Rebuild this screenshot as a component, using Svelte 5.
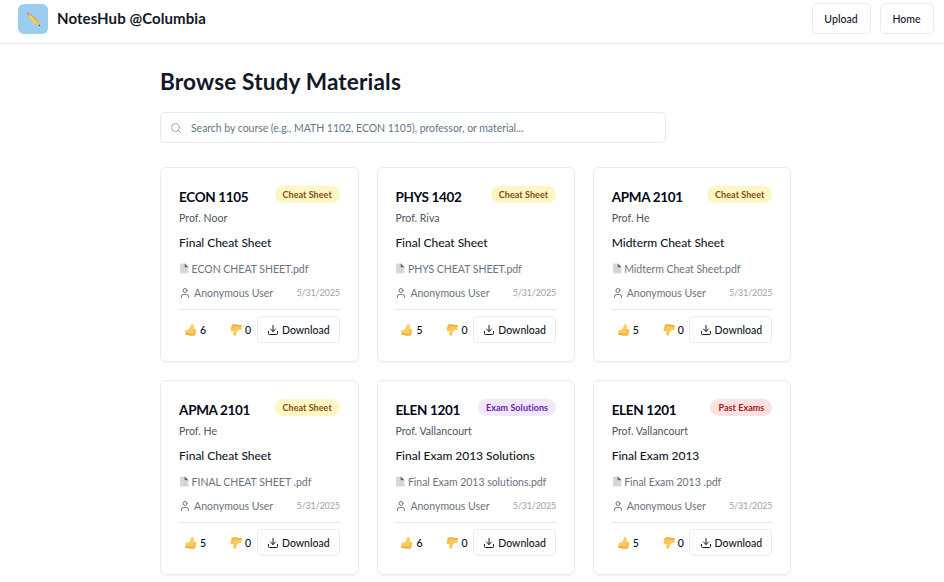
<script>
  const notes = [
    { course: 'ECON 1105', prof: 'Prof. Noor', title: 'Final Cheat Sheet', file: 'ECON CHEAT SHEET.pdf', tag: 'Cheat Sheet', kind: 'cheat', up: 6, down: 0 },
    { course: 'PHYS 1402', prof: 'Prof. Riva', title: 'Final Cheat Sheet', file: 'PHYS CHEAT SHEET.pdf', tag: 'Cheat Sheet', kind: 'cheat', up: 5, down: 0 },
    { course: 'APMA 2101', prof: 'Prof. He', title: 'Midterm Cheat Sheet', file: 'Midterm Cheat Sheet.pdf', tag: 'Cheat Sheet', kind: 'cheat', up: 5, down: 0 },
    { course: 'APMA 2101', prof: 'Prof. He', title: 'Final Cheat Sheet', file: 'FINAL CHEAT SHEET .pdf', tag: 'Cheat Sheet', kind: 'cheat', up: 5, down: 0 },
    { course: 'ELEN 1201', prof: 'Prof. Vallancourt', title: 'Final Exam 2013 Solutions', file: 'Final Exam 2013 solutions.pdf', tag: 'Exam Solutions', kind: 'solutions', up: 6, down: 0 },
    { course: 'ELEN 1201', prof: 'Prof. Vallancourt', title: 'Final Exam 2013', file: 'Final Exam 2013 .pdf', tag: 'Past Exams', kind: 'exams', up: 5, down: 0 }
  ];
</script>

{#snippet thumb(down)}
  <svg class="thumb" class:down viewBox="0 0 24 24" aria-hidden="true">
    <path d="M1 12h5c2.800-2.200 5-4.800 5.500-7.800.3-1.800.3-4 2.200-4 3.200 0 4.300 3.300 3.900 5.800L17 9.500h3.500c2.600.3 2.800 3.200 1.200 3.900 1.400.8 1.200 3-.2 3.600.8 1.200.3 2.700-1 3.100.1 1.900-1 3-2.700 3H12c-2.500 0-4-.4-6-1.200H1z" fill="#fdcb59" />
    <path d="M1 18v3.900h5c2 .8 3.500 1.200 6 1.200h5.800c1.700 0 2.800-1.100 2.700-3-3 .8-6.500.6-9-.7C8.200 18.600 4.500 18 1 18z" fill="#efaa42" />
    <path d="M16 13.400h5.300M16 17h5M15.500 20.100h4.500" fill="none" stroke="#dc9c3c" stroke-width=".8" />
  </svg>
{/snippet}

<div class="page">
  <header>
    <div class="brand">
      <span class="logo">
        <svg width="16" height="16" viewBox="0 0 16 16" aria-hidden="true">
          <path d="M3.200 5.400 5.600 3l7.500 7.800 2 4.300-4.500-1.700z" fill="#f6bd32" />
          <path d="m4.100 4.500 8.200 8.500" stroke="#ffdd60" stroke-width="1.100" />
          <path d="m5.600 3 7.500 7.800" stroke="#c8881c" stroke-width=".7" />
          <path d="m10.600 13.400 2.500-2.600 2 4.300z" fill="#e7bd85" />
          <path d="m13.500 14.500.9-1 .9 1.900z" fill="#34302e" />
          <path d="m2.200 4.400 2.400-2.500L5.900 3.200 3.400 5.700z" fill="#b6b6bd" />
          <path d="M2.400 4.600C.2 2.700 2.700.1 4.700 2z" fill="#eb8790" />
        </svg>
      </span>
      <span class="name">NotesHub @Columbia</span>
    </div>
    <nav>
      <button class="nav upload">Upload</button>
      <button class="nav home">Home</button>
    </nav>
  </header>

  <main>
    <h1>Browse Study Materials</h1>
    <div class="search">
      <svg width="12" height="12" viewBox="0 0 24 24" fill="none" stroke="#9ca3af" stroke-width="2" stroke-linecap="round" stroke-linejoin="round" aria-hidden="true"><circle cx="11" cy="11" r="8" /><path d="m21 21-4.300-4.300" /></svg>
      <span>Search by course (e.g., MATH 1102, ECON 1105), professor, or material...</span>
    </div>

    <div class="grid">
      {#each notes as n}
        <article>
          <div class="top">
            <h2>{n.course}</h2>
            <span class="tag {n.kind}">{n.tag}</span>
          </div>
          <p class="prof">{n.prof}</p>
          <p class="title">{n.title}</p>
          <p class="file">
            <svg width="10" height="11" viewBox="0 0 10 11" aria-hidden="true"><path d="M1 .500h4.800l3.700 3.700v6.300H1z" fill="#dcdcdd" /><path d="M1.800 2.500h3M1.800 4.500h3.200M1.800 6.500H8M1.800 8.500H8" stroke="#c8c9cb" stroke-width=".7" /><path d="M5.700.6v3.700h3.800z" fill="#5b5d62" /></svg>
            <span>{n.file}</span>
          </p>
          <div class="meta">
            <svg width="12" height="12" viewBox="0 0 24 24" fill="none" stroke="#6b7280" stroke-width="2" stroke-linecap="round" stroke-linejoin="round" aria-hidden="true"><path d="M19 21v-2a4 4 0 0 0-4-4H9a4 4 0 0 0-4 4v2" /><circle cx="12" cy="7" r="4" /></svg>
            <span class="user">Anonymous User</span>
            <time>5/31/2025</time>
          </div>
          <div class="actions">
            <span class="vote up">{@render thumb(false)}<b>{n.up}</b></span>
            <span class="vote">{@render thumb(true)}<b>{n.down}</b></span>
            <button class="download">
              <svg width="12" height="12" viewBox="0 0 24 24" fill="none" stroke="#0f172a" stroke-width="2" stroke-linecap="round" stroke-linejoin="round" aria-hidden="true"><path d="M21 15v4a2 2 0 0 1-2 2H5a2 2 0 0 1-2-2v-4" /><path d="m7 10 5 5 5-5M12 15V3" /></svg>
              <span>Download</span>
            </button>
          </div>
        </article>
      {/each}
    </div>
  </main>
</div>

<style>
  :global(body) { background: #fff; overflow: hidden; }
  * { box-sizing: border-box; }
  svg { display: block; flex: none; }
  h1, h2, p { margin: 0; }
  .page { width: 944px; height: 582px; overflow: hidden; background: #fff; color: #111827; font-family: Lato, "Liberation Sans", sans-serif; }
  header { height: 44px; padding: 0 10.5px 6px 18px; display: flex; align-items: center; justify-content: space-between; border-bottom: 1px solid #e9ebee; box-shadow: 0 1px 2px rgba(0, 0, 0, .03); }
  .brand { display: flex; align-items: center; gap: 9px; }
  .logo { width: 30px; height: 30px; border-radius: 6px; background: #9bcdf0; display: flex; align-items: center; justify-content: center; }
  .name { padding-bottom: 2px; font-size: 15px; line-height: 20px; font-weight: 700; letter-spacing: .08px; white-space: nowrap; }
  nav { display: flex; gap: 9px; }
  button { margin: 0; padding: 0; font-family: inherit; color: #0f172a; background: #fff; border: 1px solid #e8ebf3; border-radius: 5px; }
  .nav { height: 31px; font-size: 10.5px; font-weight: 500; letter-spacing: .03px; }
  .upload { width: 59px; }
  .home { width: 54px; }
  main { width: 632px; margin-left: 160px; padding-top: 23px; }
  h1 { font-size: 22.6px; line-height: 30px; font-weight: 700; letter-spacing: .15px; white-space: nowrap; }
  .search { width: 506px; height: 31px; margin-top: 15px; padding-left: 9px; display: flex; align-items: center; gap: 9px; border: 1px solid #e5e9f2; border-radius: 5px; color: #64748b; font-size: 10.5px; letter-spacing: -.04px; }
  .grid { margin-top: 24px; padding-left: .3px; display: grid; grid-template-columns: repeat(3, 198.300px); column-gap: 18px; row-gap: 18px; }
  article { height: 195px; padding: 18px 17.800px 0; border: 1px solid #e8ebf3; border-radius: 6px; box-shadow: 0 1px 2px rgba(0, 0, 0, .05); white-space: nowrap; }
  .top { height: 24px; display: flex; justify-content: space-between; align-items: flex-start; }
  h2 { font-size: 13.500px; line-height: 22px; font-weight: 700; letter-spacing: -.34px; color: #020817; }
  .tag { height: 17px; padding: 0 8px; border-radius: 9px; font-size: 9px; line-height: 17px; font-weight: 700; letter-spacing: .05px; }
  .cheat { background: #fef7c3; color: #854d0e; }
  .solutions { background: #f1e8fe; color: #6b21a8; }
  .exams { background: #fce1e1; color: #991b1b; }
  .prof { font-size: 10.5px; line-height: 17px; color: #4b5563; letter-spacing: .03px; }
  .title { margin-top: 7px; font-size: 12px; line-height: 18px; font-weight: 500; letter-spacing: -.03px; }
  .file { margin-top: 8px; height: 17px; display: flex; align-items: center; gap: 2.5px; font-size: 10.5px; color: #6b7280; letter-spacing: -.02px; }
  .meta { height: 24px; padding-top: 7px; display: flex; align-items: center; color: #6b7280; font-size: 10.5px; }
  .user { margin-left: 3px; }
  time { margin-left: auto; font-size: 9px; color: #9ca3af; letter-spacing: -.14px; }
  .actions { margin-top: 8px; padding-top: 6px; display: flex; align-items: center; border-top: 1px solid #e5e7eb; }
  .vote { width: 22px; display: flex; align-items: center; gap: 3px; }
  .up { margin: 0 23px 0 6px; }
  .vote b { font-size: 10.5px; font-weight: 500; color: #020817; }
  .thumb { width: 12px; height: 12px; }
  .down { transform: rotate(180deg); }
  .download { width: 83px; height: 27px; margin-left: auto; display: flex; align-items: center; justify-content: center; gap: 3px; font-size: 10.5px; font-weight: 500; }
</style>
